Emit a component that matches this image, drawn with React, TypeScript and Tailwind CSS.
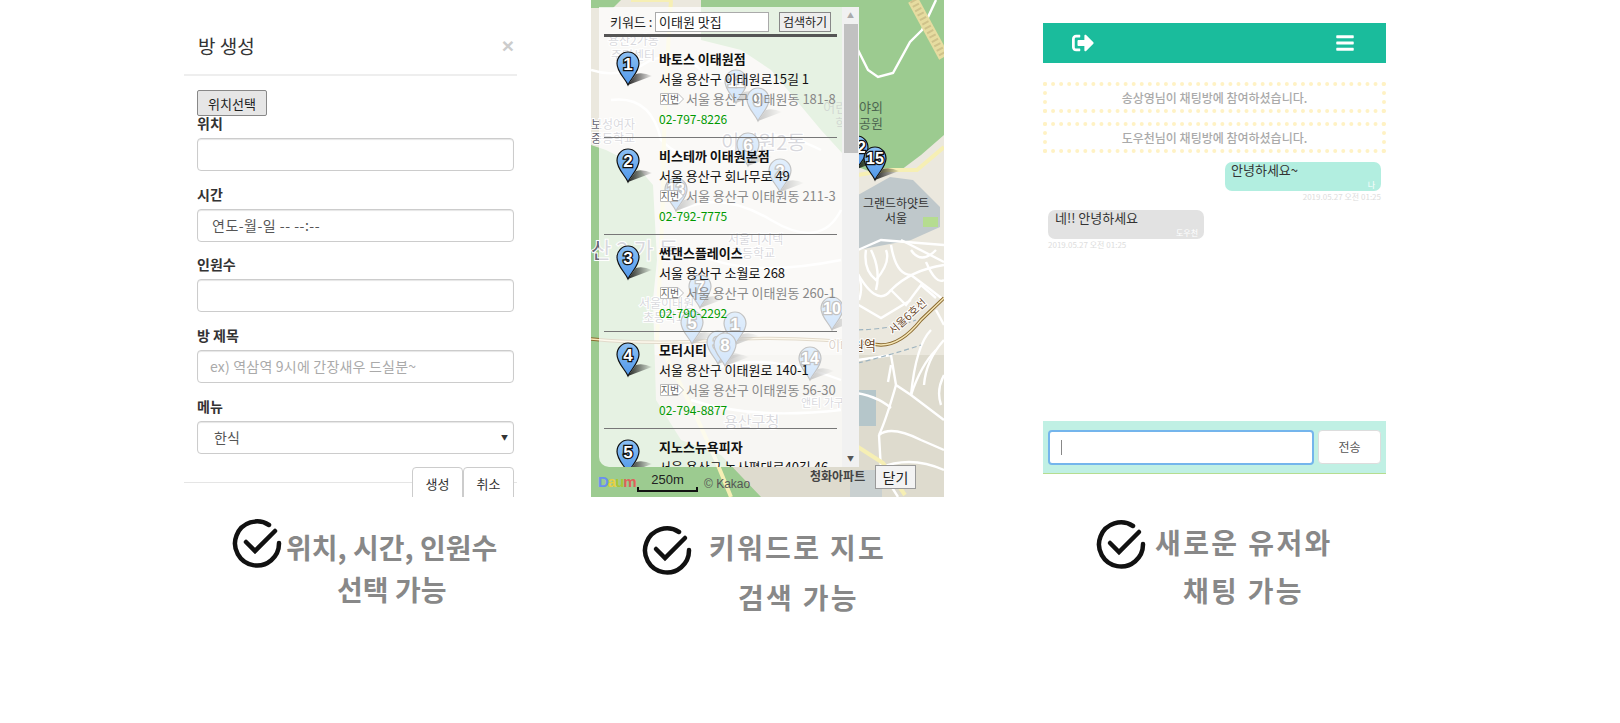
import { FaBars, FaSignOutAlt } from "react-icons/fa";

const KR = "font-['Noto_Sans_CJK_KR','Noto_Sans',sans-serif]";

const places = [
  { no: 1, name: "바토스 이태원점", road: "서울 용산구 이태원로15길 1", lot: "서울 용산구 이태원동 181-8", tel: "02-797-8226" },
  { no: 2, name: "비스테까 이태원본점", road: "서울 용산구 회나무로 49", lot: "서울 용산구 이태원동 211-3", tel: "02-792-7775" },
  { no: 3, name: "썬댄스플레이스", road: "서울 용산구 소월로 268", lot: "서울 용산구 이태원동 260-1", tel: "02-790-2292" },
  { no: 4, name: "모터시티", road: "서울 용산구 이태원로 140-1", lot: "서울 용산구 이태원동 56-30", tel: "02-794-8877" },
  { no: 5, name: "지노스뉴욕피자", road: "서울 용산구 녹사평대로40길 46", lot: "서울 용산구 이태원동 64-3", tel: "02-796-0000" },
];

// pins that sit on the map under the list panel (x, y are map coordinates)
const mapPins = [
  { no: 11, x: 133, y: 69 },
  { no: 9, x: 155, y: 87 },
  { no: 6, x: 145, y: 132 },
  { no: 2, x: 177, y: 158 },
  { no: 13, x: 73, y: 177 },
  { no: 7, x: 97, y: 274 },
  { no: 10, x: 229, y: 296 },
  { no: 5, x: 89, y: 310 },
  { no: 1, x: 132, y: 311 },
  { no: 3, x: 115, y: 330 },
  { no: 8, x: 122, y: 332 },
  { no: 14, x: 207, y: 346 },
  { no: 12, x: 254, y: 135 },
];

const mapLabels = [
  { text: "용산2가동", x: 17, y: 45, size: 12 },
  { text: "주민센터", x: 20, y: 60, size: 12 },
  { text: "보성여자", x: 0, y: 129, size: 12 },
  { text: "중등학교", x: 0, y: 143, size: 12 },
  { text: "이태원2동", x: 130, y: 150, size: 20 },
  { text: "서울디지텍", x: 137, y: 244, size: 12 },
  { text: "고등학교", x: 140, y: 258, size: 12 },
  { text: "산 2 가 동", x: 0, y: 258, size: 22 },
  { text: "서울이태원", x: 48, y: 308, size: 12 },
  { text: "초등학교", x: 52, y: 322, size: 12 },
  { text: "용산구청", x: 133, y: 427, size: 15 },
  { text: "앤티 가구", x: 210, y: 407, size: 11 },
];

const Pin = ({ no, className = "" }: { no: number; className?: string }) => (
  <svg width="40" height="36" viewBox="0 0 40 36" className={className}>
    <defs>
      <linearGradient id="pinShadow" x1="0" x2="1" y1="0" y2="0">
        <stop offset="0" stopColor="#000" stopOpacity="0.85" />
        <stop offset="1" stopColor="#000" stopOpacity="0.05" />
      </linearGradient>
      <linearGradient id="pinFill" x1="0" x2="0" y1="0" y2="1">
        <stop offset="0" stopColor="#8cc0f4" />
        <stop offset="1" stopColor="#4f97ea" />
      </linearGradient>
    </defs>
    <path d="M12 34 L36 25 Q27 21 20 23 Z" fill="url(#pinShadow)" />
    <path
      d="M12 34 C9 27 1 21 1 12.5 C1 6 6 1 12 1 C18 1 23 6 23 12.5 C23 21 15 27 12 34 Z"
      fill="url(#pinFill)"
      stroke="#111"
      strokeWidth="1.2"
    />
    <text
      x="12"
      y={no > 9 ? 17.5 : 18.5}
      textAnchor="middle"
      fontFamily="Liberation Sans, sans-serif"
      fontWeight="700"
      fontSize={no > 9 ? 16 : 17}
      fill="#fff"
      stroke="#111"
      strokeWidth="2.6"
      paintOrder="stroke"
    >
      {no}
    </text>
  </svg>
);

// the map itself, drawn rough: parks, blocks, roads and labels
const MapDrawing = () => (
  <svg width="353" height="497" viewBox="0 0 353 497" className="block">
    <rect width="353" height="497" fill="#ebe8de" />
    <rect x="0" y="355" width="353" height="142" fill="#dedbce" />
    <path d="M110 0 H353 V135 L330 155 L310 170 L280 172 L262 165 L230 130 L180 70 L150 50 L110 40 Z" fill="#9ccb90" />
    <path d="M0 0 H30 L22 8 H0 Z" fill="#9ccb90" />
    <path d="M0 145 L15 150 L45 165 L62 185 L66 260 L62 300 L65 400 L90 440 L130 455 L170 497 H0 Z" fill="#9ccb90" />
    <path d="M267 195 L299 177 L322 180 L349 207 L349 227 L320 240 L267 250 Z" fill="#bfc8cb" />
    <rect x="332" y="217" width="15" height="10" fill="#b5dc90" />
    <rect x="259" y="390" width="26" height="36" fill="#b5c6ca" />
    <rect x="259" y="470" width="32" height="27" fill="#c9d0d0" />
    <g fill="none" stroke="#fff" strokeWidth="2.4">
      <path d="M267 50 L277 70 L287 77 L302 73 L319 42 L331 30 L345 0" />
      <path d="M262 265 Q285 310 300 290 Q320 270 353 265" />
      <path d="M280 250 Q290 270 285 290" />
      <path d="M300 245 Q305 275 320 275 L340 290 L353 300" />
      <path d="M310 240 L353 262" />
      <path d="M267 360 L300 355 L305 385 L320 395 L353 420" />
      <path d="M305 385 Q295 420 288 435 Q300 425 330 440 L353 450" />
      <path d="M288 435 L290 470 L307 497" />
      <path d="M320 395 Q330 365 345 350" />
      <path d="M340 330 Q325 345 320 395" />
      <path d="M259 392 Q285 395 300 408" />
      <path d="M288 468 Q320 455 353 470" />
      <path d="M259 300 L290 318 L320 300" />
      <path d="M267 250 L290 240 L353 245" />
      <path d="M259 262 Q275 280 268 300" />
      <path d="M275 250 Q272 270 285 280 Q300 262 295 250" />
      <path d="M300 290 L315 305 L330 285 L345 298" />
      <path d="M335 262 Q345 285 353 280" />
      <path d="M320 250 Q330 265 345 250" />
      <path d="M345 310 L353 325" />
      <path d="M300 365 L297 382" />
      <path d="M353 340 Q335 360 333 385" />
      <path d="M353 375 Q345 390 350 405" />
      <path d="M0 70 Q30 80 60 60 Q90 50 110 70 Q130 90 160 75" />
      <path d="M20 100 Q60 95 70 140 Q100 170 140 150 Q170 120 230 150" />
      <path d="M90 210 Q130 190 180 220 T250 210" />
      <path d="M100 250 Q150 280 250 260" />
      <path d="M120 370 Q170 350 250 380" />
      <path d="M100 400 Q160 420 250 410" />
    </g>
    <g fill="none" stroke="#9db3bf" strokeWidth="1.2" strokeDasharray="5 3">
      <path d="M259 330 Q300 330 325 320" />
      <path d="M259 365 Q300 355 330 345" />
    </g>
    <g fill="none" stroke="#f6efb4" strokeWidth="4">
      <path d="M267 175 L296 170 L326 170 L353 147" />
      <path d="M80 0 Q72 120 72 200 L66 340 Q110 420 140 497" />
      <path d="M80 0 L40 0" />
      <path d="M267 447 L292 463 L314 495" />
    </g>
    <path d="M322 0 L353 57" stroke="#e6dca0" strokeWidth="11" fill="none" />
    <path d="M322 0 L353 57" stroke="#cfc28a" strokeWidth="7" strokeDasharray="2 3" fill="none" />
    <path d="M0 339 Q60 345 130 340 T290 345 Q310 345 330 320 L353 298" stroke="#8a6a30" strokeWidth="3.4" fill="none" />
    <path d="M0 339 Q60 345 130 340 T290 345 Q310 345 330 320 L353 298" stroke="#f6e7b8" strokeWidth="1.4" fill="none" />
    <g fontFamily="Noto Sans CJK KR, sans-serif" fill="#667" stroke="#fff" strokeWidth="2" paintOrder="stroke">
      {mapLabels.map((l) => (
        <text key={l.text} x={l.x} y={l.y} fontSize={l.size}>
          {l.text}
        </text>
      ))}
      <text x="292" y="112" fontSize="13" textAnchor="end" fill="#4d6650" stroke="none">
        어린이야외
      </text>
      <text x="292" y="128" fontSize="13" textAnchor="end" fill="#4d6650" stroke="none">
        학습공원
      </text>
      <text x="285" y="350" fontSize="13" textAnchor="end" fill="#6b4a2c">
        이태원역
      </text>
      <text x="302" y="335" fontSize="11" fill="#6b4a2c" transform="rotate(-42 302 335)">
        서울6호선
      </text>
    </g>
  </svg>
);

const Caption = ({
  first,
  second,
  className,
  firstClass,
  secondClass,
}: {
  first: string;
  second: string;
  className: string;
  firstClass: string;
  secondClass: string;
}) => (
  <div className={`${KR} text-[#888] font-bold text-[28px] leading-none ${className}`}>
    <div className="flex items-center">
      <svg width="50" height="50" viewBox="0 0 50 50" fill="none" className="shrink-0">
        <path d="M37 7 A22 22 0 1 0 47 25" stroke="#111" strokeWidth="4.5" strokeLinecap="round" />
        <path d="M14 24 L23 33 L43 13" stroke="#111" strokeWidth="4.5" strokeLinecap="round" />
      </svg>
      <span className={firstClass}>{first}</span>
    </div>
    <div className={secondClass}>{second}</div>
  </div>
);

const Field = ({ label, children }: { label: string; children: React.ReactNode }) => (
  <div className="mb-[12.7px]">
    <div className="text-[14px] font-bold text-[#333] leading-[20px] mb-[5px]">{label}</div>
    {children}
  </div>
);

const inputCls =
  "h-[33px] w-full rounded-[4px] border border-[#ccc] shadow-[inset_0_1px_1px_rgba(0,0,0,0.1)] bg-white text-[14px] flex items-center";

const RoomForm = () => (
  <div className={`${KR} h-[497px] overflow-hidden`}>
    <div className="h-[76px] border-b-2 border-[#eee] pl-[14px] pr-[3px] pt-[33px] flex justify-between items-start">
      <span className="text-[19px] leading-[26px] text-[#333]">방 생성</span>
      <span className="text-[21px] leading-[26px] font-bold text-[#ccc] font-['Liberation_Sans',sans-serif]">×</span>
    </div>
    <div className="pl-[13px] pr-[3px] pt-[14px]">
      <button className="block h-[26px] w-[70px] mb-[-3px] border border-[#888] rounded-[2px] bg-[#e6e6e6] text-[13px] text-[#222] leading-none">
        위치선택
      </button>
      <Field label="위치">
        <div className={inputCls} />
      </Field>
      <Field label="시간">
        <div className={`${inputCls} pl-[14px] text-[#555] tracking-[0.5px]`}>연도-월-일 -- --:--</div>
      </Field>
      <Field label="인원수">
        <div className={inputCls} />
      </Field>
      <Field label="방 제목">
        <div className={`${inputCls} pl-[12px] text-[#aaa] tracking-[0.2px]`}>ex) 역삼역 9시에 간장새우 드실분~</div>
      </Field>
      <Field label="메뉴">
        <div className={`${inputCls} justify-between pl-[16px] pr-[5px] text-[#555]`}>
          <span>한식</span>
          <span className="text-[7px] text-[#333]">▼</span>
        </div>
      </Field>
    </div>
    <div className="relative mt-[28px] h-0 border-t border-[#e5e5e5]">
      <div className="absolute right-[3px] top-[-16px] flex">
        <div className="w-[51px] h-[40px] pb-[6px] border border-[#ccc] rounded-[4px] bg-white text-[13px] text-[#333] flex items-center justify-center">
          생성
        </div>
        <div className="w-[51px] h-[40px] pb-[6px] border border-[#ccc] rounded-[4px] bg-white text-[13px] text-[#333] flex items-center justify-center">
          취소
        </div>
      </div>
    </div>
  </div>
);

const LotBadge = () => (
  <svg width="26" height="14" viewBox="0 0 26 14" className="mr-px shrink-0">
    <path d="M1.5 1.5 H19 L24.5 7 L19 12.5 H1.5 Z" fill="#fff" stroke="#bbb" />
    <text x="11" y="11" textAnchor="middle" fontSize="10" fill="#666" fontFamily="Noto Sans CJK KR, sans-serif">
      지번
    </text>
  </svg>
);

const PlaceRow = ({ place }: { place: (typeof places)[number] }) => (
  <div className="relative h-[97px] border-b border-[#777] pl-[55px] pt-[8px] text-[13px] leading-[20px] text-[#111] whitespace-nowrap">
    <Pin no={place.no} className="absolute left-[12px] top-[10px]" />
    <div className="font-bold">{place.name}</div>
    <div>{place.road}</div>
    <div className="flex items-center text-[#888]">
      <LotBadge />
      {place.lot}
    </div>
    <div className="text-[12px] text-[#009900]">{place.tel}</div>
  </div>
);

const MapSearch = () => (
  <div className={`${KR} relative w-[353px] h-[497px] overflow-hidden`}>
    <MapDrawing />
    {mapPins.map((p) => (
      <div key={p.no} className="absolute" style={{ left: p.x, top: p.y }}>
        <Pin no={p.no} />
      </div>
    ))}
    <Pin no={15} className="absolute left-[272px] top-[146px]" />
    <div className="absolute left-[270px] top-[195px] w-[70px] text-center text-[12px] leading-[15px] text-[#333]">
      그랜드하얏트
      <br />
      서울
    </div>
    <div className="absolute left-[8px] top-[7px] w-[260px] h-[460px] bg-white/75 rounded-bl-[10px] overflow-hidden">
      <div className="pl-[5px] w-[243px]">
        <div className="flex items-center h-[27px] pl-[6px] pt-[2px] text-[13px] text-[#222]">
          <span className="w-[45px]">키워드 :</span>
          <span className="w-[114px] h-[20px] border border-[#aaa] bg-white px-[3px] leading-[17px] text-[#222]">
            이태원 맛집
          </span>
          <button className="ml-[10px] w-[52px] h-[20px] shrink-0 border border-[#888] bg-[#eee] text-[12px] leading-none">
            검색하기
          </button>
        </div>
        <div className="w-[233px] border-t-[3px] border-[#555] pt-[4px]">
          {places.map((p) => (
            <PlaceRow key={p.no} place={p} />
          ))}
        </div>
      </div>
      <div className="absolute right-0 top-0 bottom-0 w-[17px] bg-[#f1f1f1] flex flex-col items-center">
        <span className="text-[7px] leading-[17px] text-[#aaa]">▲</span>
        <div className="w-[14px] h-[129px] bg-[#c1c1c1]" />
        <span className="mt-auto text-[7px] leading-[18px] text-[#555]">▼</span>
      </div>
    </div>
    <div className="absolute left-[7px] top-[474px] font-['Liberation_Sans',sans-serif] font-bold text-[15px] leading-[15px] tracking-[-1px]">
      <span className="text-[#6a8ff0]">D</span>
      <span className="text-[#e8d040]">a</span>
      <span className="text-[#a8c838]">u</span>
      <span className="text-[#e0605a]">m</span>
    </div>
    <div className="absolute left-[46px] top-[473px] w-[61px] text-center text-[13px] leading-[14px] text-[#222] font-['Liberation_Sans',sans-serif]">
      250m
      <div className="h-[5px] border-x-[2px] border-b-[2px] border-[#111]" />
    </div>
    <div className="absolute left-[113px] top-[477px] text-[12px] leading-[14px] text-[#555] font-['Liberation_Sans',sans-serif]">
      © Kakao
    </div>
    <div className="absolute left-[219px] top-[468px] text-[12px] leading-[16px] font-bold text-[#444]">청화아파트</div>
    <button className="absolute left-[284px] top-[465px] w-[41px] h-[24px] border border-[#999] bg-[#f3f3f3] text-[14px] leading-none text-[#222]">
      닫기
    </button>
  </div>
);

const Notice = ({ children }: { children: React.ReactNode }) => (
  <div className="h-[31px] mb-[9px] border-[4px] border-dotted border-[#fff2c4] flex items-center justify-center text-[12px] font-medium text-[#aaa]">
    {children}
  </div>
);

const ChatRoom = () => (
  <div className={`${KR} h-[497px] pt-[23px] flex flex-col`}>
    <div className="h-[40px] bg-[#1abc9c] flex items-center justify-between pl-[29px] pr-[31px] shrink-0">
      <FaSignOutAlt size={22} color="#fff" />
      <FaBars size={20} color="#fff" />
    </div>
    <div className="pt-[19px] h-[358px] shrink-0">
      <Notice>송상영님이 채팅방에 참여하셨습니다.</Notice>
      <Notice>도우천님이 채팅방에 참여하셨습니다.</Notice>
      <div className="flex flex-col items-end pr-[5px]">
        <div className="w-[156px] h-[29px] rounded-[7px] bg-[#b2eee0] pl-[6px] text-[13px] leading-[16px] text-[#333] relative">
          안녕하세요~
          <span className="absolute right-[6px] bottom-[1px] text-[8px] leading-[10px] text-white">나</span>
        </div>
        <div className="text-[8px] leading-[11px] text-[#ddd]">2019.05.27 오전 01:25</div>
      </div>
      <div className="pl-[5px] mt-[8px]">
        <div className="w-[156px] h-[29px] rounded-[7px] bg-[#e2e2e2] pl-[7px] text-[13px] leading-[16px] text-[#333] relative">
          네!! 안녕하세요
          <span className="absolute right-[6px] bottom-[1px] text-[8px] leading-[10px] text-white">도우천</span>
        </div>
        <div className="text-[8px] leading-[11px] text-[#ddd]">2019.05.27 오전 01:25</div>
      </div>
    </div>
    <div className="h-[53px] bg-[#c0f0e4] border-b border-[#b5dd90] flex items-center px-[5px] gap-[4px] shrink-0">
      <div className="w-[267px] h-[35px] bg-white rounded-[4px] border-2 border-[#74b5ec] flex items-center pl-[11px]">
        <span className="w-px h-[15px] bg-[#888]" />
      </div>
      <div className="w-[63px] h-[34px] bg-white rounded-[4px] border border-[#ddd] flex items-center justify-center text-[12px] text-[#555]">
        전송
      </div>
    </div>
  </div>
);

export default function App() {
  return (
    <div className="w-[1620px] h-[723px] bg-white overflow-hidden pl-[184px] flex">
      <div className="w-[333px] mr-[74px]">
        <RoomForm />
        <Caption
          first="위치, 시간, 인원수"
          second="선택 가능"
          className="pl-[48px] pt-[21px]"
          firstClass="ml-[4px] mt-[8px]"
          secondClass="pl-[105px] mt-[7px]"
        />
      </div>
      <div className="w-[353px] mr-[99px]">
        <MapSearch />
        <Caption
          first="키워드로 지도"
          second="검색 가능"
          className="pl-[51px] pt-[28px]"
          firstClass="ml-[17px] mb-[6px] tracking-[2.3px]"
          secondClass="pl-[96px] mt-[8px] tracking-[2.3px]"
        />
      </div>
      <div className="w-[343px]">
        <ChatRoom />
        <Caption
          first="새로운 유저와"
          second="채팅 가능"
          className="pl-[53px] pt-[22px]"
          firstClass="ml-[9px] mb-[4px] tracking-[2.4px]"
          secondClass="pl-[87px] mt-[7px] tracking-[2.3px]"
        />
      </div>
    </div>
  );
}
